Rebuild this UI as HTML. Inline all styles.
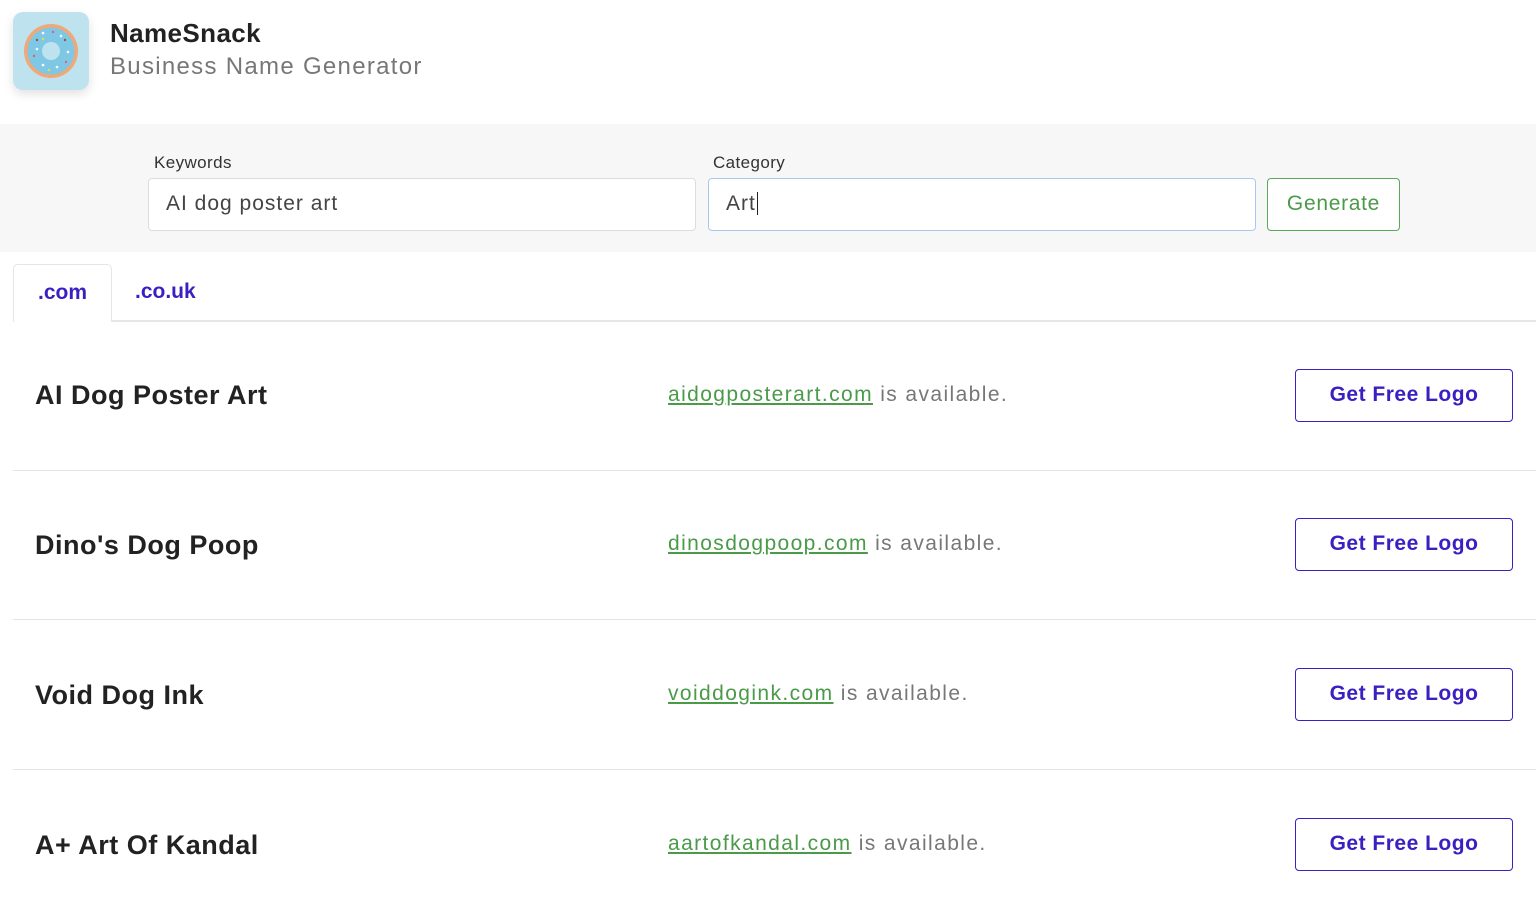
<!DOCTYPE html>
<html><head><meta charset="utf-8"><style>
*{box-sizing:border-box;margin:0;padding:0}
body{width:1536px;height:907px;overflow:hidden;background:#fff;font-family:"Liberation Sans",sans-serif;color:#222}
.logo{position:absolute;left:13px;top:12px;width:76px;height:78px;border-radius:10px;background:#bfe2ef;box-shadow:0 4px 10px rgba(0,0,0,.12)}
.t1{position:absolute;left:110px;top:18px;font-size:26px;font-weight:bold;color:#222;letter-spacing:.4px}
.t2{position:absolute;left:110px;top:53px;font-size:24px;color:#777;letter-spacing:1.3px}
.bar{position:absolute;left:0;top:124px;width:1536px;height:128px;background:#f7f7f8}
.lbl{position:absolute;top:153px;font-size:17px;color:#333;letter-spacing:.4px}
.inp{position:absolute;top:178px;width:548px;height:53px;border:1.5px solid #ddd;border-radius:4px;background:#fff;font-size:21px;padding:13px 17px;color:#444;letter-spacing:1px}
.gen{position:absolute;left:1267px;top:178px;width:133px;height:53px;border:1.5px solid #5aa85a;border-radius:4px;background:#fff;color:#4a9a4a;font-size:21px;text-align:center;line-height:50px;letter-spacing:.7px}
.tab{position:absolute;top:264px;height:58px;font-size:21px;font-weight:bold;color:#3b1fc2;line-height:56px}
.tabline{position:absolute;left:13px;top:320px;width:1523px;height:2px;background:#e6e6ea}
.row{position:absolute;left:13px;width:1523px;height:150px;border-bottom:1.5px solid #e4e4e4}
.nm{position:absolute;left:22px;top:60px;font-size:27px;font-weight:bold;color:#222;letter-spacing:.5px}
.dm{position:absolute;left:655px;top:62px;font-size:21px;color:#777;letter-spacing:1.4px}
.dm a{color:#4a9a4a;text-decoration:underline}
.btn{position:absolute;left:1282px;top:48px;width:218px;height:53px;border:1.5px solid #3b1fc2;border-radius:4px;color:#3b1fc2;font-weight:bold;font-size:21px;text-align:center;line-height:50px;letter-spacing:.5px}
</style></head><body>
<div class="logo"><svg width="76" height="78" viewBox="0 0 76 78"><circle cx="38" cy="39" r="27" fill="#f0a878"/><circle cx="38" cy="39" r="23.5" fill="#7ec8e6"/><circle cx="38" cy="39" r="9" fill="#bfe2ef"/>
<g fill="#fff"><circle cx="30" cy="21" r="1.3"/><circle cx="48" cy="24" r="1.3"/><circle cx="55" cy="40" r="1.3"/><circle cx="24" cy="37" r="1.3"/><circle cx="44" cy="55" r="1.3"/><circle cx="30" cy="53" r="1.3"/></g>
<g fill="#e0607a"><circle cx="40" cy="20" r="1.2"/><circle cx="21" cy="44" r="1.2"/><circle cx="53" cy="50" r="1.2"/></g>
<g fill="#8a5a3a"><circle cx="52" cy="28" r="1.2"/><circle cx="24" cy="28" r="1.2"/></g>
<g fill="#e8d84a"><circle cx="36" cy="58" r="1.2"/><circle cx="30" cy="27" r="1.2"/></g></svg></div>
<div class="t1">NameSnack</div>
<div class="t2">Business Name Generator</div>
<div class="bar"></div>
<div class="lbl" style="left:154px">Keywords</div>
<div class="lbl" style="left:713px">Category</div>
<div class="inp" style="left:148px">AI dog poster art</div>
<div class="inp" style="left:708px;border-color:#a9c8f0">Art<span style="border-left:1.5px solid #222;margin-left:1px"></span></div>
<div class="gen">Generate</div>
<div class="tab" style="left:13px;width:99px;border:1.5px solid #e6e6ea;border-bottom:none;border-radius:5px 5px 0 0;background:#fff;text-align:center;z-index:2">.com</div>
<div class="tab" style="left:135px">.co.uk</div>
<div class="tabline"></div>
<div class="row" style="top:321px"><div class="nm" style="top:59px">AI Dog Poster Art</div><div class="dm"><a>aidogposterart.com</a> is available.</div><div class="btn">Get Free Logo</div></div>
<div class="row" style="top:470px"><div class="nm">Dino's Dog Poop</div><div class="dm"><a>dinosdogpoop.com</a> is available.</div><div class="btn">Get Free Logo</div></div>
<div class="row" style="top:620px"><div class="nm">Void Dog Ink</div><div class="dm"><a>voiddogink.com</a> is available.</div><div class="btn">Get Free Logo</div></div>
<div class="row" style="top:770px;border:none"><div class="nm">A+ Art Of Kandal</div><div class="dm"><a>aartofkandal.com</a> is available.</div><div class="btn">Get Free Logo</div></div>
</body></html>
